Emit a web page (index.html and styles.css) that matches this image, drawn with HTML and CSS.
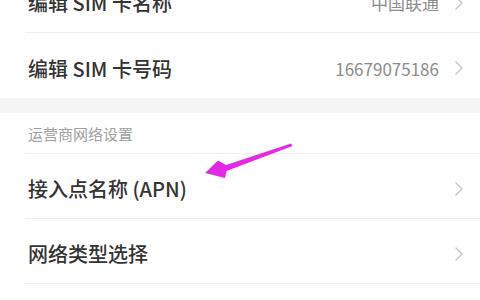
FILE: index.html
```html
<!DOCTYPE html>
<html lang="zh-CN">
<head>
<meta charset="utf-8">
<link rel="stylesheet" href="styles.css">
</head>
<body>
<div class="page">
  <div class="group first">
    <div class="row">
      <span class="label">编辑 SIM 卡名称</span>
      <span class="value">中国联通</span>
      <svg class="chev" viewBox="0 0 8 14" width="8" height="14"><polyline points="1,1 7,7 1,13"/></svg>
    </div>
    <div class="row last">
      <span class="label">编辑 SIM 卡号码</span>
      <span class="value">16679075186</span>
      <svg class="chev" viewBox="0 0 8 14" width="8" height="14"><polyline points="1,1 7,7 1,13"/></svg>
    </div>
  </div>
  <div class="band"></div>
  <div class="group">
    <div class="section">运营商网络设置</div>
    <div class="row">
      <span class="label">接入点名称 (APN)</span>
      <svg class="chev" viewBox="0 0 8 14" width="8" height="14"><polyline points="1,1 7,7 1,13"/></svg>
    </div>
    <div class="row">
      <span class="label">网络类型选择</span>
      <svg class="chev" viewBox="0 0 8 14" width="8" height="14"><polyline points="1,1 7,7 1,13"/></svg>
    </div>
    <div class="row"></div>
  </div>
  <svg class="arrow" viewBox="0 0 480 300" width="480" height="300">
    <polygon points="291,143.5 226,165 218,160.5 205,173 225,178 226.5,171 292.5,146" />
  </svg>
</div>
</body>
</html>
```
FILE: styles.css
```css
html, body {
  margin: 0;
  padding: 0;
  background: #ffffff;
}
body {
  width: 480px;
  height: 300px;
  overflow: hidden;
  font-family: "Noto Sans CJK SC", "Noto Sans", sans-serif;
}
.page {
  position: relative;
  width: 480px;
  height: 300px;
  overflow: hidden;
}
.group.first {
  margin-top: -32px;
}
.row {
  box-sizing: border-box;
  display: flex;
  align-items: center;
  height: 65px;
  margin-left: 25px;
  padding-left: 3px;
  padding-right: 17px;
  padding-top: 5px;
  border-bottom: 1px solid #efefef;
}
.row.last {
  border-bottom: none;
}
.label {
  flex: 1;
  font-size: 20px;
  font-weight: 500;
  color: #343434;
}
.value {
  font-size: 17px;
  color: #8c8c8c;
  margin-right: 16px;
}
.chev {
  display: block;
  flex: none;
}
.chev polyline {
  fill: none;
  stroke: #c4c4c4;
  stroke-width: 1.4;
  stroke-linecap: round;
  stroke-linejoin: round;
}
.band {
  height: 15px;
  background: #f5f5f5;
}
.section {
  box-sizing: border-box;
  height: 41px;
  margin-left: 25px;
  padding-left: 3px;
  padding-top: 10px;
  font-size: 15px;
  color: #a0a0a0;
  border-bottom: 1px solid #efefef;
}
.arrow {
  position: absolute;
  left: 0;
  top: 0;
  pointer-events: none;
}
.arrow polygon {
  fill: #e22ae6;
}
```
